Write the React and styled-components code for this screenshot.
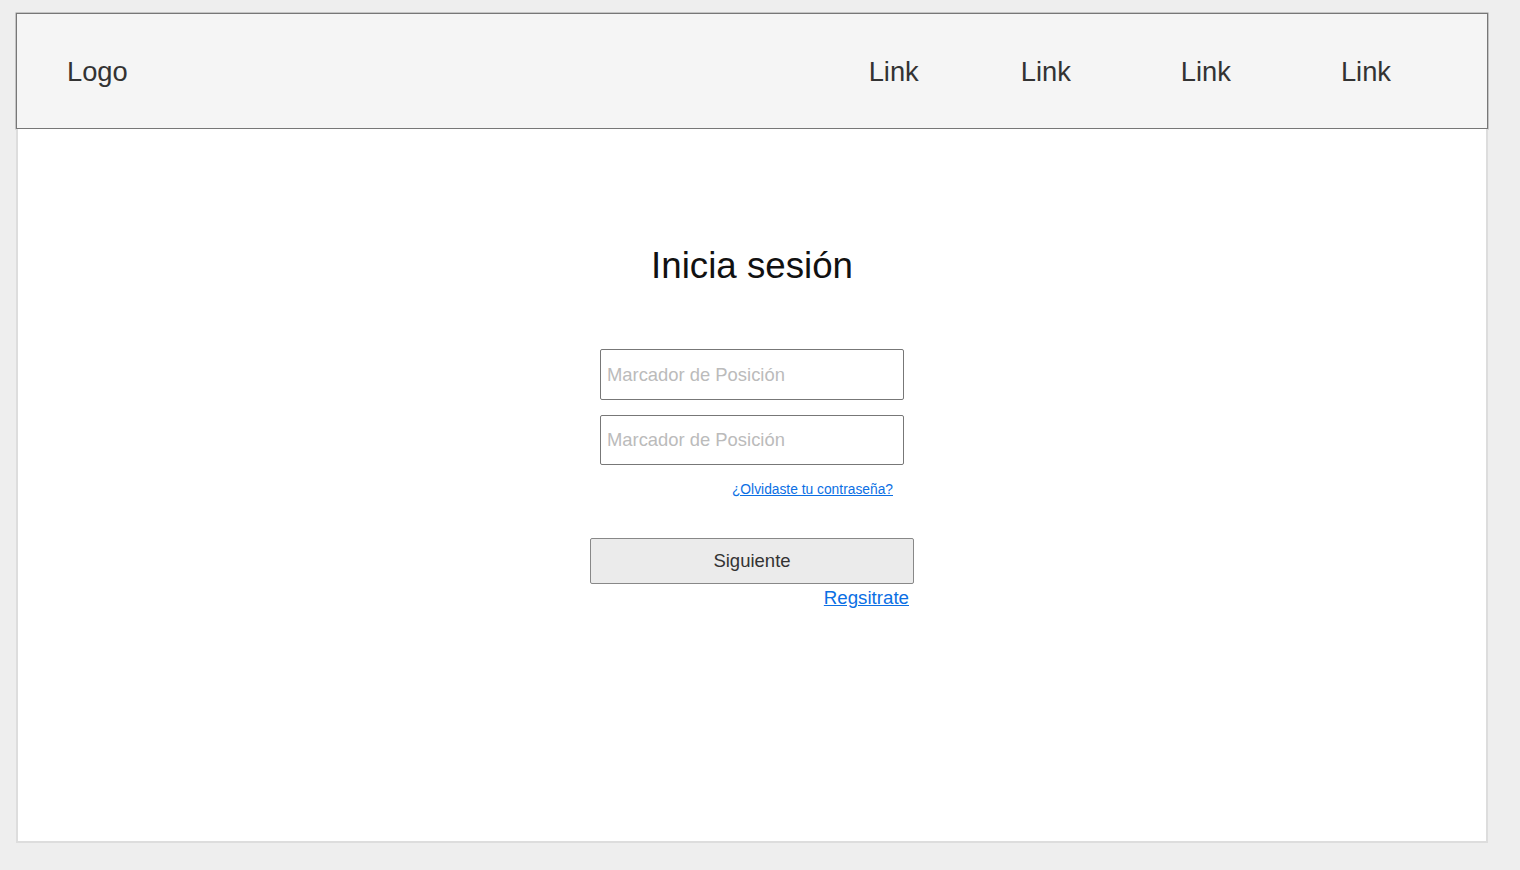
import React from 'react';
import styled, { createGlobalStyle } from 'styled-components';

const GlobalStyle = createGlobalStyle`
  html, body {
    margin: 0;
    padding: 0;
    background: #eeeeee;
    font-family: 'Liberation Sans', Arial, sans-serif;
  }
`;

const Page = styled.div`
  padding: 13px 0 0 16px;
  min-height: 870px;
  box-sizing: border-box;
`;

const Window = styled.div`
  width: 1472px;
  height: 830px;
  display: flex;
  flex-direction: column;
`;

const Header = styled.header`
  width: 1472px;
  height: 116px;
  box-sizing: border-box;
  flex-shrink: 0;
  display: flex;
  align-items: center;
  padding: 2px 96px 0 50px;
  background: #f5f5f5;
  border: 1px solid #777777;
  box-shadow: 0 0 0 0.5px #999999;
`;

const Logo = styled.div`
  font-size: 27.3px;
  color: #333333;
`;

const Nav = styled.nav`
  margin-left: auto;
  display: flex;
  align-items: center;
`;

const NavLink = styled.a`
  font-size: 27.3px;
  color: #333333;
  text-decoration: none;
  margin-left: ${props => props.$space || 0}px;
`;

const Body = styled.main`
  flex: 1;
  background: #ffffff;
  border: 2px solid #dddddd;
  border-top: none;
  display: flex;
  flex-direction: column;
  align-items: center;
`;

const Title = styled.h1`
  margin: 116px 0 0;
  font-size: 36.7px;
  font-weight: normal;
  line-height: 41px;
  color: #111111;
`;

const Form = styled.form`
  width: 324px;
  margin-top: 63px;
  display: flex;
  flex-direction: column;
  align-items: center;
`;

const Input = styled.input`
  width: 304px;
  height: ${props => (props.$last ? 50 : 51)}px;
  box-sizing: border-box;
  margin-bottom: ${props => (props.$last ? 0 : 15)}px;
  padding: 0 6px;
  border: 1px solid #777777;
  border-radius: 2px;
  font-family: 'Liberation Sans', Arial, sans-serif;
  font-size: 18.4px;
  color: #333333;
  outline: none;

  &::placeholder {
    color: #bbbbbb;
  }
`;

const LinkRow = styled.div`
  width: ${props => props.$width}px;
  box-sizing: border-box;
  text-align: right;
  padding-right: ${props => props.$inset}px;
  margin-top: ${props => props.$top}px;
`;

const TextLink = styled.a`
  font-size: ${props => props.$size}px;
  line-height: ${props => Math.round(props.$size * 1.15)}px;
  color: #0b6fe4;
  text-decoration: underline;
  cursor: pointer;
`;

const Button = styled.button`
  width: 324px;
  height: 46px;
  margin-top: 40px;
  background: #ebebeb;
  border: 1px solid #888888;
  border-radius: 2px;
  font-family: 'Liberation Sans', Arial, sans-serif;
  font-size: 18.5px;
  color: #333333;
  cursor: pointer;
`;

export default function App() {
  return (
    <>
      <GlobalStyle />
      <Page>
        <Window>
          <Header>
            <Logo>Logo</Logo>
            <Nav>
              <NavLink>Link</NavLink>
              <NavLink $space={102}>Link</NavLink>
              <NavLink $space={110}>Link</NavLink>
              <NavLink $space={110}>Link</NavLink>
            </Nav>
          </Header>
          <Body>
            <Title>Inicia sesión</Title>
            <Form onSubmit={e => e.preventDefault()}>
              <Input placeholder="Marcador de Posición" />
              <Input $last placeholder="Marcador de Posición" />
              <LinkRow $width={304} $inset={11} $top={15}>
                <TextLink $size={13.8}>¿Olvidaste tu contraseña?</TextLink>
              </LinkRow>
              <Button type="button">Siguiente</Button>
              <LinkRow $width={324} $inset={5} $top={3}>
                <TextLink $size={18.7}>Regsitrate</TextLink>
              </LinkRow>
            </Form>
          </Body>
        </Window>
      </Page>
    </>
  );
}
